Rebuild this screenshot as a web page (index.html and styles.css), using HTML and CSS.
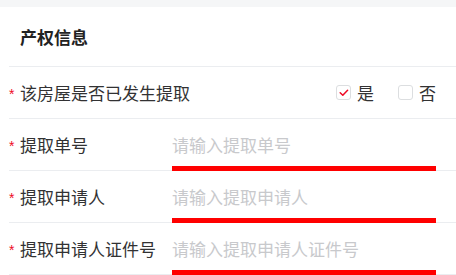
FILE: index.html
```html
<!DOCTYPE html>
<html lang="zh-CN">
<head>
<meta charset="utf-8">
<title>产权信息</title>
<link rel="stylesheet" href="styles.css">
</head>
<body>
<div class="band"></div>
<section class="card">
  <div class="head">产权信息</div>
  <div class="row">
    <span class="star">*</span>
    <span class="label">该房屋是否已发生提取</span>
    <div class="choices">
      <label class="choice">
        <span class="box">
          <svg width="15" height="15" viewBox="0 0 15 15"><path d="M4.2 7.8 L6.8 10.3 L11.6 5.2" fill="none" stroke="#ee0a24" stroke-width="1.5" stroke-linecap="round" stroke-linejoin="round"/></svg>
        </span>
        <span class="choice-text">是</span>
      </label>
      <label class="choice">
        <span class="box"></span>
        <span class="choice-text">否</span>
      </label>
    </div>
  </div>
  <div class="row">
    <span class="star">*</span>
    <span class="label">提取单号</span>
    <div class="value"><span class="placeholder">请输入提取单号</span></div>
  </div>
  <div class="row">
    <span class="star">*</span>
    <span class="label">提取申请人</span>
    <div class="value"><span class="placeholder">请输入提取申请人</span></div>
  </div>
  <div class="row">
    <span class="star">*</span>
    <span class="label">提取申请人证件号</span>
    <div class="value"><span class="placeholder">请输入提取申请人证件号</span></div>
  </div>
</section>
</body>
</html>
```

FILE: styles.css
```css
html, body {
  margin: 0;
  padding: 0;
  background: #ffffff;
}
body {
  font-family: "Noto Sans CJK SC", "Noto Sans", sans-serif;
  color: #323233;
  font-size: 17px;
  line-height: 24px;
}
.band {
  height: 7px;
  background: #f5f6f7;
}
.card {
  background: #ffffff;
}
.head {
  height: 59px;
  margin-left: 9px;
  padding-left: 11px;
  display: flex;
  align-items: center;
  font-weight: 700;
  font-size: 17px;
  color: #222;
  border-bottom: 1px solid #ebedf0;
}
.row {
  height: 51px;
  margin-left: 9px;
  padding-right: 20px;
  display: flex;
  align-items: center;
  border-bottom: 1px solid #ebedf0;
}
.star {
  width: 12px;
  margin-left: -1px;
  font-family: "Liberation Sans", sans-serif;
  font-size: 14px;
  line-height: 14px;
  color: #ee0a24;
  text-align: left;
  padding-left: 1px;
  box-sizing: border-box;
  transform: translateY(1px);
}
.label {
  width: 152px;
  flex: none;
  white-space: nowrap;
}
.choices {
  margin-left: auto;
  display: flex;
  align-items: center;
  gap: 24px;
}
.choice {
  display: flex;
  align-items: center;
  gap: 6px;
}
.box {
  width: 15px;
  height: 15px;
  box-sizing: border-box;
  border: 1px solid #dcdee0;
  border-radius: 3px;
  display: block;
  position: relative;
}
.box svg {
  position: absolute;
  left: -1px;
  top: -1px;
}
.choice-text {
  line-height: 24px;
}
.value {
  flex: 1;
  align-self: stretch;
  margin-bottom: -1px;
  padding-top: 4px;
  border-bottom: 5px solid #ff0000;
  display: flex;
  align-items: center;
}
.placeholder {
  color: #c8c9cc;
  white-space: nowrap;
}
```
